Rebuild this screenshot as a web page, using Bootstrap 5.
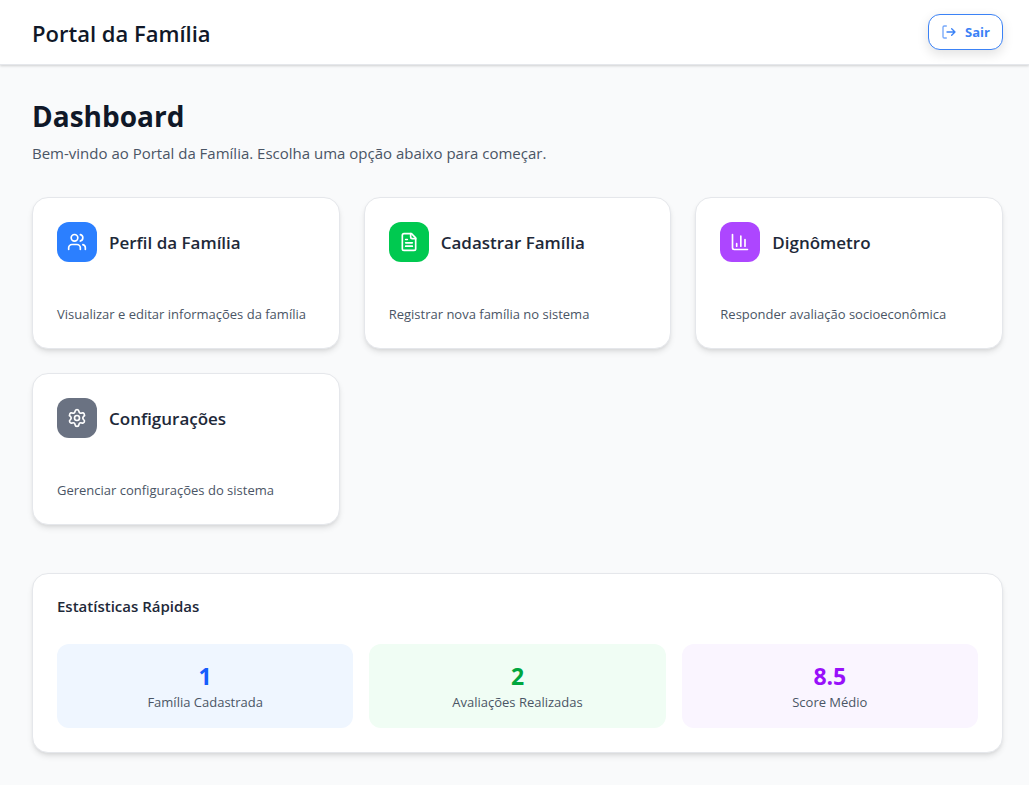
<!DOCTYPE html>
<html lang="pt-BR">
<head>
<meta charset="utf-8">
<meta name="viewport" content="width=device-width, initial-scale=1">
<title>Portal da Família</title>
<link href="https://cdn.jsdelivr.net/npm/bootstrap@5.3.0/dist/css/bootstrap.min.css" rel="stylesheet">
<style>
  body { font-family: "Segoe UI", "Open Sans", "Noto Sans", sans-serif; background: #f9fafb; color: #101828; }
  .page-x { padding-left: 32px; padding-right: 26px; }
  .topbar { height: 65px; background: #fff; border-bottom: 1px solid #e5e7eb; box-shadow: 0 1px 3px rgba(0,0,0,.1), 0 1px 2px rgba(0,0,0,.08); }
  .brand { font-size: 22px; line-height: 32px; font-weight: 600; padding-top: 2px; }
  .btn-exit { --bs-btn-color: #3b82f6; --bs-btn-border-color: #3b82f6; --bs-btn-bg: #fff; --bs-btn-hover-color: #fff; --bs-btn-hover-bg: #3b82f6;
    --bs-btn-padding-x: 12px; --bs-btn-padding-y: 7px; --bs-btn-font-size: 13px; --bs-btn-font-weight: 700; --bs-btn-border-radius: 12px;
    line-height: 20px; box-shadow: 0 4px 12px rgba(0,0,0,.12); }
  .content { padding-top: 32px; padding-bottom: 32px; }
  .title { font-size: 28px; line-height: 38px; font-weight: 700; margin-bottom: 6px; }
  .intro { font-size: 15px; line-height: 24px; color: #4a5565; }
  .panel { background: #fff; border: 1px solid #e5e7eb; border-radius: 16px; padding: 24px; box-shadow: 0 4px 6px -1px rgba(0,0,0,.1), 0 2px 4px -2px rgba(0,0,0,.1); }
  .option { color: inherit; min-height: 152px; }
  .tile { width: 40px; height: 40px; border-radius: 12px; color: #fff; }
  .line-icon { fill: none; stroke: currentColor; stroke-width: 2; stroke-linecap: round; stroke-linejoin: round; }
  .option-name { font-size: 17px; line-height: 28px; font-weight: 600; color: #1e2939; padding-top: 2px; }
  .note { font-size: 13px; line-height: 20px; color: #4a5565; }
  .stats-title { font-size: 15px; line-height: 16px; font-weight: 600; color: #1e2939; margin-bottom: 30px; }
  .stat { border-radius: 12px; padding: 16px; }
  .stat-value { font-size: 23px; line-height: 32px; font-weight: 700; }
  .bg-blue { background: #2b7fff; } .bg-green { background: #00c950; } .bg-purple { background: #ad46ff; } .bg-gray { background: #6a7282; }
  .stat-blue { background: #eff6ff; } .stat-green { background: #f0fdf4; } .stat-purple { background: #faf5ff; }
  .stat-blue .stat-value { color: #155dfc; } .stat-green .stat-value { color: #00a63e; } .stat-purple .stat-value { color: #9810fa; }
</style>
</head>
<body>
<header class="topbar page-x d-flex align-items-center justify-content-between">
  <div class="brand">Portal da Família</div>
  <button type="button" class="btn btn-exit d-flex align-items-center gap-2">
    <svg class="line-icon" width="16" height="16" viewBox="0 0 24 24" aria-hidden="true"><path opacity=".7" d="M8 21H5a2 2 0 0 1-2-2V5a2 2 0 0 1 2-2h3"/><path d="m16 17 5-5-5-5M21 12H9"/></svg>
    Sair
  </button>
</header>

<main class="content page-x">
  <h1 class="title">Dashboard</h1>
  <p class="intro mb-0">Bem-vindo ao Portal da Família. Escolha uma opção abaixo para começar.</p>

  <div class="row row-cols-1 row-cols-md-2 row-cols-lg-3 g-4 mt-2">
    <div class="col">
      <a href="#perfil" class="panel option d-flex flex-column justify-content-between text-decoration-none">
        <div class="d-flex align-items-center">
          <span class="tile bg-blue d-flex align-items-center justify-content-center"><svg class="line-icon" width="20" height="20" viewBox="0 0 24 24" aria-hidden="true"><path d="M16 21v-2a4 4 0 0 0-4-4H6a4 4 0 0 0-4 4v2"/><circle cx="9" cy="7" r="4"/><path d="M22 21v-2a4 4 0 0 0-3-3.87M16 3.13a4 4 0 0 1 0 7.75"/></svg></span>
          <h2 class="option-name mb-0 ms-2 ps-1">Perfil da Família</h2>
        </div>
        <p class="note mb-0">Visualizar e editar informações da família</p>
      </a>
    </div>
    <div class="col">
      <a href="#cadastro" class="panel option d-flex flex-column justify-content-between text-decoration-none">
        <div class="d-flex align-items-center">
          <span class="tile bg-green d-flex align-items-center justify-content-center"><svg class="line-icon" width="20" height="20" viewBox="0 0 24 24" aria-hidden="true"><path d="M15 2H6a2 2 0 0 0-2 2v16a2 2 0 0 0 2 2h12a2 2 0 0 0 2-2V7Z"/><path d="M14 2v4a2 2 0 0 0 2 2h4M10 9H8M16 13H8M16 17H8"/></svg></span>
          <h2 class="option-name mb-0 ms-2 ps-1">Cadastrar Família</h2>
        </div>
        <p class="note mb-0">Registrar nova família no sistema</p>
      </a>
    </div>
    <div class="col">
      <a href="#dignometro" class="panel option d-flex flex-column justify-content-between text-decoration-none">
        <div class="d-flex align-items-center">
          <span class="tile bg-purple d-flex align-items-center justify-content-center"><svg class="line-icon" width="20" height="20" viewBox="0 0 24 24" aria-hidden="true"><path d="M3 3v16a2 2 0 0 0 2 2h16M18 17V9M13 17V5M8 17v-3"/></svg></span>
          <h2 class="option-name mb-0 ms-2 ps-1">Dignômetro</h2>
        </div>
        <p class="note mb-0">Responder avaliação socioeconômica</p>
      </a>
    </div>
    <div class="col">
      <a href="#configuracoes" class="panel option d-flex flex-column justify-content-between text-decoration-none">
        <div class="d-flex align-items-center">
          <span class="tile bg-gray d-flex align-items-center justify-content-center"><svg class="line-icon" width="20" height="20" viewBox="0 0 24 24" aria-hidden="true"><path d="M9.671 4.136a2.34 2.34 0 0 1 4.659 0 2.34 2.34 0 0 0 3.319 1.915 2.34 2.34 0 0 1 2.33 4.033 2.34 2.34 0 0 0 0 3.831 2.34 2.34 0 0 1-2.33 4.033 2.34 2.34 0 0 0-3.319 1.915 2.34 2.34 0 0 1-4.659 0 2.34 2.34 0 0 0-3.32-1.915 2.34 2.34 0 0 1-2.33-4.033 2.34 2.34 0 0 0 0-3.831A2.34 2.34 0 0 1 6.35 6.051a2.34 2.34 0 0 0 3.319-1.915"/><circle cx="12" cy="12" r="3"/></svg></span>
          <h2 class="option-name mb-0 ms-2 ps-1">Configurações</h2>
        </div>
        <p class="note mb-0">Gerenciar configurações do sistema</p>
      </a>
    </div>
  </div>

  <section class="panel mt-5">
    <h2 class="stats-title">Estatísticas Rápidas</h2>
    <div class="row row-cols-1 row-cols-md-3 g-3">
      <div class="col"><div class="stat stat-blue text-center"><div class="stat-value">1</div><div class="note">Família Cadastrada</div></div></div>
      <div class="col"><div class="stat stat-green text-center"><div class="stat-value">2</div><div class="note">Avaliações Realizadas</div></div></div>
      <div class="col"><div class="stat stat-purple text-center"><div class="stat-value">8.5</div><div class="note">Score Médio</div></div></div>
    </div>
  </section>
</main>
<script src="https://cdn.jsdelivr.net/npm/bootstrap@5.3.0/dist/js/bootstrap.bundle.min.js"></script>
</body>
</html>
